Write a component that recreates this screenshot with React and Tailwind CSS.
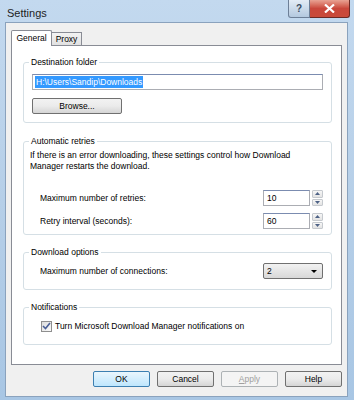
import { useState } from 'react'

function Button({ children, primary, disabled, className = '' }) {
  return (
    <div
      className={`flex items-center justify-center h-[16px] rounded-[2px] border text-[8.5px] ${
        primary
          ? 'border-[#3c7fb1] bg-gradient-to-b from-[#eaf6fd] to-[#bee6fd] text-black'
          : disabled
            ? 'border-[#adb2b5] bg-[#f4f4f4] text-[#a0a0a0]'
            : 'border-[#707070] bg-gradient-to-b from-[#f2f2f2] via-[#ebebeb] to-[#d5d5d5] text-black'
      } ${className}`}
    >
      {children}
    </div>
  )
}

function Group({ title, className = '', children }) {
  return (
    <div className={`relative border border-[#d5dfe5] rounded-[3px] ${className}`}>
      <span className="absolute -top-[7px] left-[5px] bg-white px-[2px] leading-[12px] text-[8.5px]">{title}</span>
      {children}
    </div>
  )
}

function Spinner({ value }) {
  return (
    <div className="flex items-center gap-[2px]">
      <div className="w-[47px] h-[16px] border border-[#abadb3] border-t-[#7b8cb0] flex items-center pl-[3px] text-[8.5px]">{value}</div>
      <div className="flex flex-col h-[16px] w-[11px] gap-[1px]">
        <div className="flex-1 border border-[#c5c9ce] rounded-[1px] bg-gradient-to-b from-[#f6f6f6] to-[#e4e4e4] flex items-center justify-center">
          <svg width="5" height="3" viewBox="0 0 5 3"><path d="M2.5 0 L5 3 L0 3 Z" fill="#4d6185" /></svg>
        </div>
        <div className="flex-1 border border-[#c5c9ce] rounded-[1px] bg-gradient-to-b from-[#f6f6f6] to-[#e4e4e4] flex items-center justify-center">
          <svg width="5" height="3" viewBox="0 0 5 3"><path d="M0 0 L5 0 L2.5 3 Z" fill="#4d6185" /></svg>
        </div>
      </div>
    </div>
  )
}

export default function App() {
  const [notify, setNotify] = useState(true)

  return (
    <div
      className="w-[354px] h-[400px] flex flex-col bg-gradient-to-b from-[#c3d9ef] via-[#b6cfe8] to-[#a8c6e4] text-[#000] overflow-hidden"
      style={{ fontFamily: '"Liberation Sans", Arial, sans-serif' }}
    >
      {/* Title bar */}
      <div className="h-[22px] flex items-start justify-between pl-[7px] pr-[4px]">
        <span className="mt-[5px] text-[11px] text-[#1e1e1e]">Settings</span>
        <div className="flex">
          <div className="w-[22px] h-[18px] border border-[#6d7f97] border-t-0 rounded-bl-[3px] bg-gradient-to-b from-[#e3ecf6] to-[#b4c9df] flex items-center justify-center text-[10px] text-[#3a4a5e] font-bold">?</div>
          <div className="w-[40px] h-[18px] border border-[#6b2a25] border-t-0 border-l-0 rounded-br-[3px] bg-gradient-to-b from-[#e8a293] via-[#c9473b] to-[#c94b3a] flex items-center justify-center">
            <svg width="11" height="9" viewBox="0 0 11 9">
              <path d="M1 0.5 L5.5 4.5 L10 0.5 M1 8.5 L5.5 4.5 L10 8.5" stroke="#fff" strokeWidth="2.2" fill="none" />
            </svg>
          </div>
        </div>
      </div>

      {/* Client area */}
      <div className="ml-[5px] mr-[6px] h-[375px] border border-[#8aa2bd] bg-[#f0f0f0] flex flex-col px-[5px]">
        {/* Tabs */}
        <div className="flex items-end h-[22px]">
          <div className="h-[16px] w-[41px] border border-[#898c95] border-b-0 bg-white flex items-center justify-center text-[8.5px] rounded-t-[2px] relative top-[1px]">General</div>
          <div className="h-[13px] w-[30px] border border-[#898c95] border-l-0 border-b-0 bg-gradient-to-b from-[#f3f3f3] to-[#e1e1e1] flex items-center justify-center text-[8.5px]">Proxy</div>
        </div>

        {/* Tab panel */}
        <div className="h-[320px] w-[331px] border border-[#898c95] bg-white pl-[11px] pr-[9px] pt-[16px] flex flex-col">
          <Group title="Destination folder" className="h-[61px] px-[8px] pt-[11px]">
            <div className="h-[16px] w-[291px] border border-[#abadb3] border-t-[#7b8cb0] flex items-center pl-[2px]">
              <span className="bg-[#3399ff] text-white text-[8.5px] leading-[12px] px-[1px]">H:\Users\Sandip\Downloads</span>
            </div>
            <Button className="w-[90px] mt-[8px]">Browse...</Button>
          </Group>

          <Group title="Automatic retries" className="h-[94px] mt-[18px] px-[6px] pt-[8px]">
            <p className="text-[8.5px] leading-[11px]">If there is an error downloading, these settings control how Download<br />Manager restarts the download.</p>
            <div className="flex items-center justify-between pl-[10px] pr-[2px] mt-[18px]">
              <span className="text-[8.5px]">Maximum number of retries:</span>
              <Spinner value="10" />
            </div>
            <div className="flex items-center justify-between pl-[10px] pr-[2px] mt-[7px]">
              <span className="text-[8.5px]">Retry interval (seconds):</span>
              <Spinner value="60" />
            </div>
          </Group>

          <Group title="Download options" className="h-[38px] mt-[17px] pl-[16px] pr-[8px] pt-[10px]">
            <div className="flex items-center justify-between">
              <span className="text-[8.5px]">Maximum number of connections:</span>
              <div className="w-[60px] h-[16px] border border-[#707070] rounded-[2px] bg-gradient-to-b from-[#f2f2f2] to-[#d8d8d8] flex items-center justify-between pl-[3px] pr-[5px] text-[8.5px]">
                <span>2</span>
                <svg width="6" height="3" viewBox="0 0 6 3"><path d="M0 0 L6 0 L3 3 Z" fill="#000" /></svg>
              </div>
            </div>
          </Group>

          <Group title="Notifications" className="h-[38px] mt-[17px] pl-[17px] pt-[12px]">
            <label className="flex items-center gap-[3px] text-[8.5px]" onClick={() => setNotify(!notify)}>
              <span className="w-[11px] h-[11px] border border-[#8f8f8f] bg-gradient-to-br from-[#dcdcdc] to-[#fbfbfb] flex items-center justify-center">
                {notify && (
                  <svg width="9" height="8" viewBox="0 0 9 8">
                    <path d="M1 4 L3.5 6.5 L8 1" stroke="#4a5f97" strokeWidth="1.6" fill="none" />
                  </svg>
                )}
              </span>
              Turn Microsoft Download Manager notifications on
            </label>
          </Group>
        </div>

        {/* Buttons */}
        <div className="flex justify-end gap-[7px] mt-[6px]">
          <Button primary className="w-[57px]">OK</Button>
          <Button className="w-[57px]">Cancel</Button>
          <Button disabled className="w-[57px]"><span className="underline">A</span>pply</Button>
          <Button className="w-[57px]">Help</Button>
        </div>
      </div>
    </div>
  )
}
